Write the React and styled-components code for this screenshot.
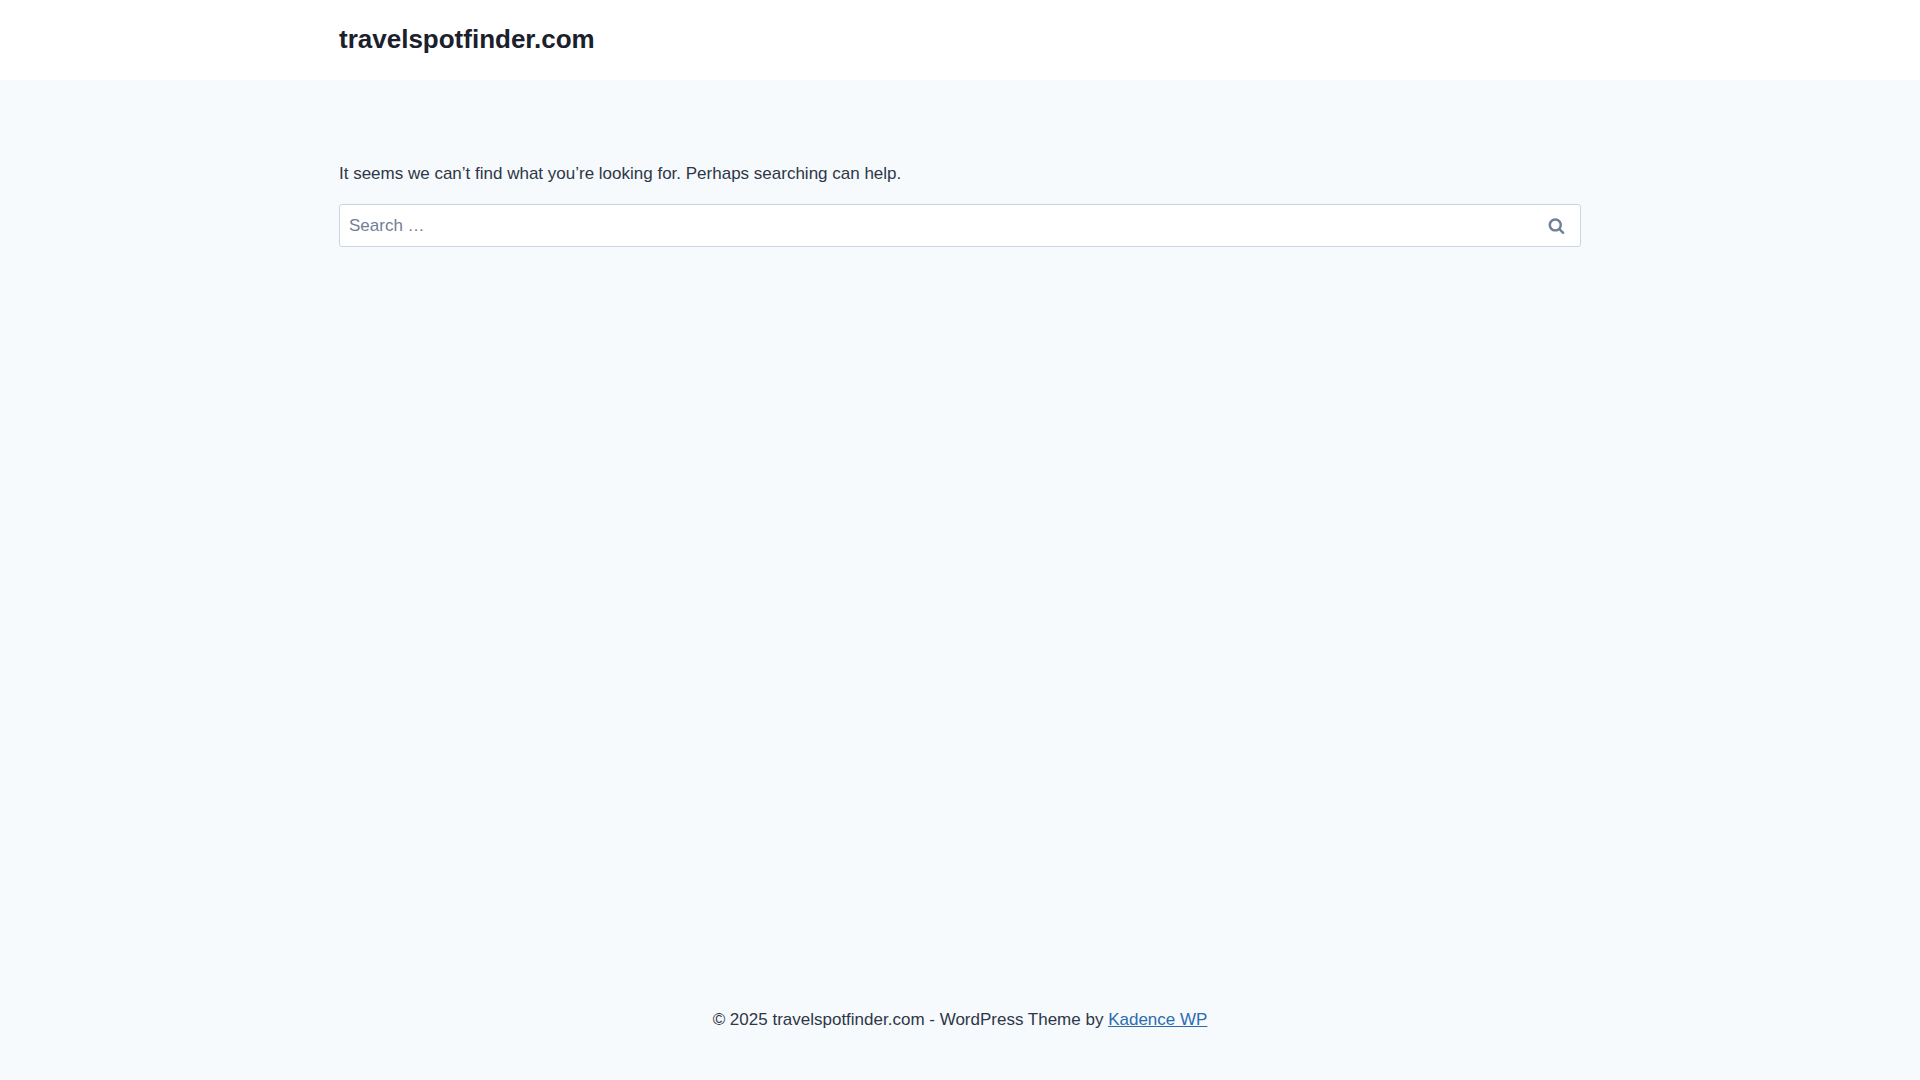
import styled, { createGlobalStyle } from "styled-components";

const App = () => {
    return (
        <>
            <GlobalStyle />
            <Page>
                <Header>
                    <Container>
                        <Header__brand href="/">travelspotfinder.com</Header__brand>
                    </Container>
                </Header>

                <Main>
                    <Container>
                        <Main__paragraph>
                            It seems we can’t find what you’re looking for. Perhaps searching can help.
                        </Main__paragraph>
                        <Search role="search" onSubmit={event => event.preventDefault()}>
                            <Search__field type="search" name="s" placeholder="Search …" aria-label="Search for:" />
                            <Search__button type="submit" aria-label="Search">
                                <SearchIcon />
                            </Search__button>
                        </Search>
                    </Container>
                </Main>

                <Footer>
                    <Container>
                        <Footer__paragraph>
                            © 2025 travelspotfinder.com - WordPress Theme by <Footer__link href="https://www.kadencewp.com/">Kadence WP</Footer__link>
                        </Footer__paragraph>
                    </Container>
                </Footer>
            </Page>
        </>
    )
}

const SearchIcon = () => (
    <svg width="17" height="17" viewBox="0 0 26 28" fill="currentColor" aria-hidden="true">
        <path d="M18 13c0-3.859-3.141-7-7-7s-7 3.141-7 7 3.141 7 7 7 7-3.141 7-7zM26 26c0 1.094-0.906 2-2 2-0.531 0-1.047-0.219-1.406-0.594l-5.359-5.344c-1.828 1.266-4.016 1.937-6.234 1.937-6.078 0-11-4.922-11-11s4.922-11 11-11 11 4.922 11 11c0 2.219-0.672 4.406-1.937 6.234l5.359 5.359c0.359 0.359 0.578 0.875 0.578 1.406z" />
    </svg>
)

const GlobalStyle = createGlobalStyle`
    *, *::before, *::after {
        box-sizing: border-box;
    }

    body {
        margin: 0;
        background-color: #f7fafc;
        color: #2d3748;
        font-family: "Liberation Sans", Arial, sans-serif;
        font-size: 17px;
        line-height: 27px;
        -webkit-font-smoothing: antialiased;
    }
`;

const Page = styled.div`
    min-height: 100vh;
    display: flex;
    flex-direction: column;
`;

const Container = styled.div`
    width: 100%;
    max-width: 1290px;
    margin: 0 auto;
    padding: 0 24px;
`;

const Header = styled.header`
    min-height: 80px;
    display: flex;
    align-items: center;
    padding-bottom: 2px;
    background-color: #ffffff;
`;

const Header__brand = styled.a`
    display: block;
    color: #1a202c;
    font-size: 26px;
    font-weight: 700;
    line-height: 32px;
    text-decoration: none;
`;

const Main = styled.main`
    flex: 1;
    padding: 80px 0;
`;

const Main__paragraph = styled.p`
    margin: 0 0 17px;
`;

const Search = styled.form`
    display: flex;
    background-color: #ffffff;
    border: 1px solid #cbd5e0;
    border-radius: 3px;
`;

const Search__field = styled.input`
    flex: 1;
    min-width: 0;
    padding: 6px 9px;
    border: 0;
    background: transparent;
    color: #2d3748;
    font: inherit;
    line-height: 29px;
    outline: 0;
    appearance: none;

    &::placeholder {
        color: #718096;
        opacity: 1;
    }
`;

const Search__button = styled.button`
    width: 47px;
    display: flex;
    justify-content: center;
    align-items: center;
    padding: 0;
    border: 0;
    background: transparent;
    color: #718096;
    cursor: pointer;
`;

const Footer = styled.footer`
    padding: 30px 0;
    text-align: center;
`;

const Footer__paragraph = styled.p`
    margin: 0;
    padding: 16px 0 17px;
`;

const Footer__link = styled.a`
    color: #2b6cb0;
    text-decoration: underline;
`;

export default App;
